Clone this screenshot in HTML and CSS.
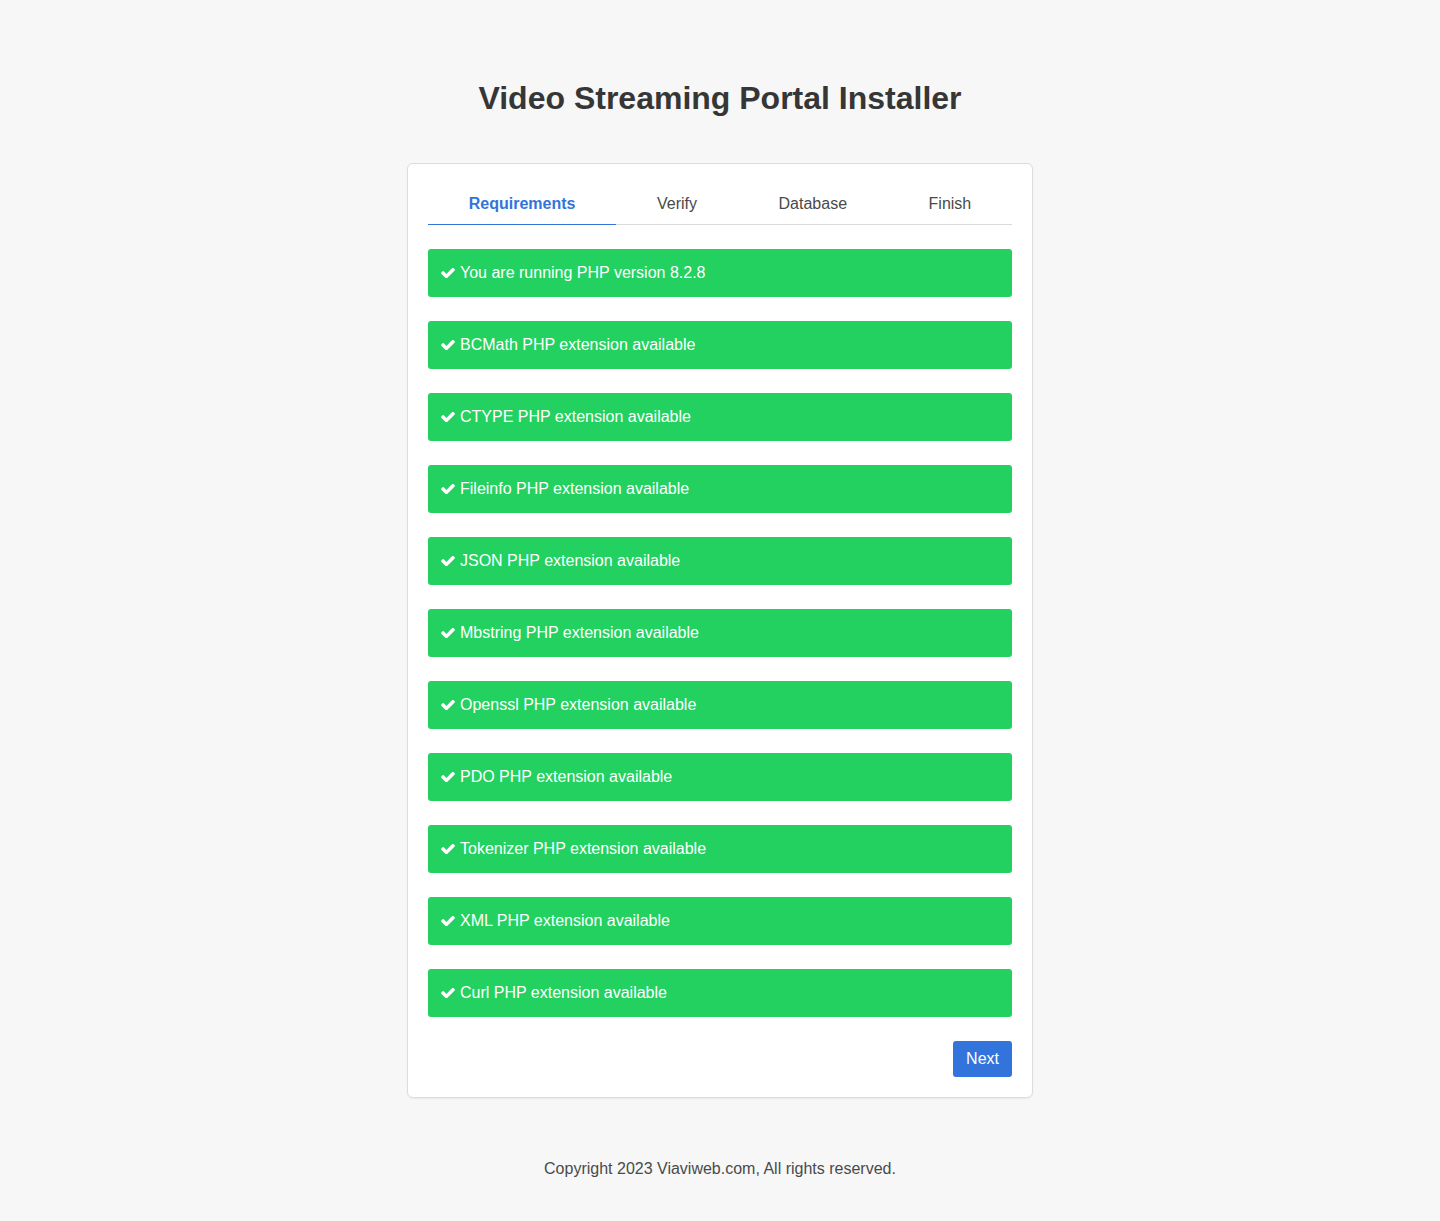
FILE: index.html
```html
<!DOCTYPE html>
<html>
<head>
<meta charset="utf-8">
<title>Video Streaming Portal Installer</title>
<link rel="stylesheet" href="styles.css">
</head>
<body>
<div class="page">
  <h1 class="title">Video Streaming Portal Installer</h1>
  <div class="card">
    <div class="tabs">
      <div class="tab active">Requirements</div>
      <div class="tab">Verify</div>
      <div class="tab">Database</div>
      <div class="tab">Finish</div>
    </div>
    <div class="list">
      <div class="alert"><svg class="check" viewBox="110 390 1570 1050"><path d="M1671 566q0 40-28 68l-724 724-136 136q-28 28-68 28t-68-28l-136-136-362-362q-28-28-28-68t28-68l136-136q28-28 68-28t68 28l294 295 656-657q28-28 68-28t68 28l136 136q28 28 28 68z"/></svg>You are running PHP version 8.2.8</div>
      <div class="alert"><svg class="check" viewBox="110 390 1570 1050"><path d="M1671 566q0 40-28 68l-724 724-136 136q-28 28-68 28t-68-28l-136-136-362-362q-28-28-28-68t28-68l136-136q28-28 68-28t68 28l294 295 656-657q28-28 68-28t68 28l136 136q28 28 28 68z"/></svg>BCMath PHP extension available</div>
      <div class="alert"><svg class="check" viewBox="110 390 1570 1050"><path d="M1671 566q0 40-28 68l-724 724-136 136q-28 28-68 28t-68-28l-136-136-362-362q-28-28-28-68t28-68l136-136q28-28 68-28t68 28l294 295 656-657q28-28 68-28t68 28l136 136q28 28 28 68z"/></svg>CTYPE PHP extension available</div>
      <div class="alert"><svg class="check" viewBox="110 390 1570 1050"><path d="M1671 566q0 40-28 68l-724 724-136 136q-28 28-68 28t-68-28l-136-136-362-362q-28-28-28-68t28-68l136-136q28-28 68-28t68 28l294 295 656-657q28-28 68-28t68 28l136 136q28 28 28 68z"/></svg>Fileinfo PHP extension available</div>
      <div class="alert"><svg class="check" viewBox="110 390 1570 1050"><path d="M1671 566q0 40-28 68l-724 724-136 136q-28 28-68 28t-68-28l-136-136-362-362q-28-28-28-68t28-68l136-136q28-28 68-28t68 28l294 295 656-657q28-28 68-28t68 28l136 136q28 28 28 68z"/></svg>JSON PHP extension available</div>
      <div class="alert"><svg class="check" viewBox="110 390 1570 1050"><path d="M1671 566q0 40-28 68l-724 724-136 136q-28 28-68 28t-68-28l-136-136-362-362q-28-28-28-68t28-68l136-136q28-28 68-28t68 28l294 295 656-657q28-28 68-28t68 28l136 136q28 28 28 68z"/></svg>Mbstring PHP extension available</div>
      <div class="alert"><svg class="check" viewBox="110 390 1570 1050"><path d="M1671 566q0 40-28 68l-724 724-136 136q-28 28-68 28t-68-28l-136-136-362-362q-28-28-28-68t28-68l136-136q28-28 68-28t68 28l294 295 656-657q28-28 68-28t68 28l136 136q28 28 28 68z"/></svg>Openssl PHP extension available</div>
      <div class="alert"><svg class="check" viewBox="110 390 1570 1050"><path d="M1671 566q0 40-28 68l-724 724-136 136q-28 28-68 28t-68-28l-136-136-362-362q-28-28-28-68t28-68l136-136q28-28 68-28t68 28l294 295 656-657q28-28 68-28t68 28l136 136q28 28 28 68z"/></svg>PDO PHP extension available</div>
      <div class="alert"><svg class="check" viewBox="110 390 1570 1050"><path d="M1671 566q0 40-28 68l-724 724-136 136q-28 28-68 28t-68-28l-136-136-362-362q-28-28-28-68t28-68l136-136q28-28 68-28t68 28l294 295 656-657q28-28 68-28t68 28l136 136q28 28 28 68z"/></svg>Tokenizer PHP extension available</div>
      <div class="alert"><svg class="check" viewBox="110 390 1570 1050"><path d="M1671 566q0 40-28 68l-724 724-136 136q-28 28-68 28t-68-28l-136-136-362-362q-28-28-28-68t28-68l136-136q28-28 68-28t68 28l294 295 656-657q28-28 68-28t68 28l136 136q28 28 28 68z"/></svg>XML PHP extension available</div>
      <div class="alert"><svg class="check" viewBox="110 390 1570 1050"><path d="M1671 566q0 40-28 68l-724 724-136 136q-28 28-68 28t-68-28l-136-136-362-362q-28-28-28-68t28-68l136-136q28-28 68-28t68 28l294 295 656-657q28-28 68-28t68 28l136 136q28 28 28 68z"/></svg>Curl PHP extension available</div>
    </div>
    <div class="actions">
      <button class="btn">Next</button>
    </div>
  </div>
  <p class="footer">Copyright 2023 Viaviweb.com, All rights reserved.</p>
</div>
</body>
</html>
```
FILE: styles.css
```css
html, body {
  margin: 0;
  padding: 0;
}
body {
  background: #f7f7f7;
  font-family: "Liberation Sans", Arial, sans-serif;
  color: #4a4a4a;
  font-size: 16px;
}
.page {
  display: flex;
  flex-direction: column;
  align-items: center;
  padding-top: 78px;
}
.title {
  margin: 0;
  font-size: 32px;
  line-height: 40px;
  font-weight: 700;
  color: #363636;
}
.card {
  margin-top: 45px;
  width: 584px;
  padding: 20px;
  background: #fff;
  border: 1px solid #dcdcdc;
  border-radius: 6px;
  box-shadow: 0 1px 2px rgba(0,0,0,0.06);
}
.tabs {
  display: flex;
  border-bottom: 1px solid #dbdbdb;
}
.tab {
  flex: 1 1 auto;
  text-align: center;
  padding: 10px 0 11px;
  line-height: 19px;
  color: #4a4a4a;
  margin-bottom: -1px;
  border-bottom: 1px solid transparent;
}
.tab.active {
  color: #3273dc;
  font-weight: 700;
  border-bottom-color: #3273dc;
}
.list {
  margin-top: 24px;
  display: flex;
  flex-direction: column;
  gap: 24px;
}
.alert {
  display: flex;
  align-items: center;
  height: 48px;
  box-sizing: border-box;
  padding: 0 13px;
  background: #23d160;
  color: #fff;
  border-radius: 3px;
  font-size: 16px;
}
.check {
  width: 14px;
  height: 10px;
  fill: #fff;
  margin-right: 5px;
  flex-shrink: 0;
}
.actions {
  display: flex;
  justify-content: flex-end;
  margin-top: 24px;
}
.btn {
  font-family: "Liberation Sans", Arial, sans-serif;
  font-size: 16px;
  color: #fff;
  background: #3273dc;
  border: none;
  border-radius: 3px;
  height: 36px;
  padding: 0 13px;
  cursor: pointer;
}
.footer {
  margin: 61px 0 0;
  font-size: 16px;
  line-height: 20px;
  color: #4a4a4a;
}
```
